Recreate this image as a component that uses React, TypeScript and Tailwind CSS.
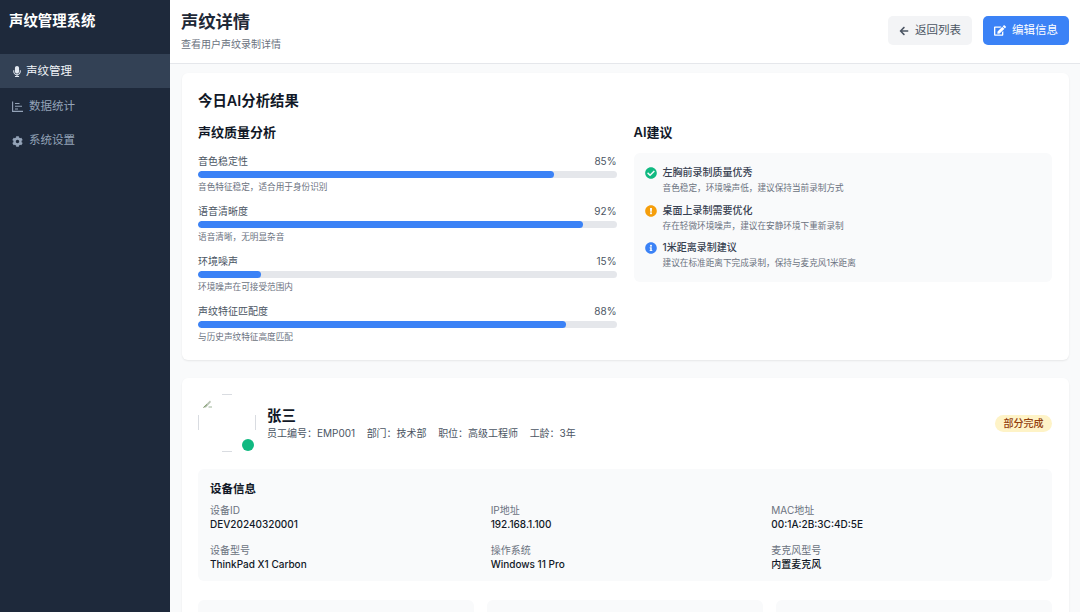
import React from "react";
import { FaArrowLeft, FaCheckCircle, FaCog, FaEdit, FaExclamationCircle, FaInfoCircle, FaMicrophone } from "react-icons/fa";

const font = { fontFamily: 'Inter, "Noto Sans CJK SC", sans-serif' };

const metrics = [
  { name: "音色稳定性", value: 85, note: "音色特征稳定，适合用于身份识别" },
  { name: "语音清晰度", value: 92, note: "语音清晰，无明显杂音" },
  { name: "环境噪声", value: 15, note: "环境噪声在可接受范围内" },
  { name: "声纹特征匹配度", value: 88, note: "与历史声纹特征高度匹配" },
];

const tips = [
  { icon: <FaCheckCircle className="text-[#10b981]" />, title: "左胸前录制质量优秀", note: "音色稳定，环境噪声低，建议保持当前录制方式" },
  { icon: <FaExclamationCircle className="text-[#f59e0b]" />, title: "桌面上录制需要优化", note: "存在轻微环境噪声，建议在安静环境下重新录制" },
  { icon: <FaInfoCircle className="text-[#3b82f6]" />, title: "1米距离录制建议", note: "建议在标准距离下完成录制，保持与麦克风1米距离" },
];

const device = [
  ["设备ID", "DEV20240320001"],
  ["IP地址", "192.168.1.100"],
  ["MAC地址", "00:1A:2B:3C:4D:5E"],
  ["设备型号", "ThinkPad X1 Carbon"],
  ["操作系统", "Windows 11 Pro"],
  ["麦克风型号", "内置麦克风"],
];

function ChartIcon() {
  return (
    <svg width="11" height="11" viewBox="0 0 11 11" fill="none" stroke="currentColor" strokeWidth="1.1" className="shrink-0">
      <path d="M0.6 0.5V10.4H11" />
      <path d="M3 2.5H7.5M3 5.2H10M3 8H6" />
    </svg>
  );
}

function Avatar() {
  return (
    <div className="relative w-[58px] h-[58px] shrink-0">
      <svg width="58" height="58" viewBox="0 0 58 58" fill="none">
        <path d="M24 0.5H34M0.5 21V36M57.5 21V36M24 57.5H34" stroke="#d9dce1" strokeWidth="1" />
        <path d="M5 13.5L12 6.5L13 8L8 13.5Z" fill="#b9c4b4" />
        <path d="M5.5 13.5L9 10.5" stroke="#7d9a6a" strokeWidth="1" />
        <path d="M10.5 13H14" stroke="#9fb59a" strokeWidth="1" />
      </svg>
      <span className="absolute right-[2px] bottom-[1px] w-3 h-3 rounded-full bg-[#10b981]" />
    </div>
  );
}

export default function App() {
  return (
    <div style={font} className="flex w-[1080px] h-[612px] overflow-hidden bg-[#f9fafb] text-[#1f2937]">
      <aside className="w-[170px] shrink-0 bg-[#1e293b]">
        <div className="px-[9px] pt-[11px] h-[54px] text-[14.4px] leading-[20px] font-semibold text-white">声纹管理系统</div>
        <nav>
          <div className="h-[34px] flex items-center gap-[4px] pl-[12px] pt-[1px] bg-[#334155] text-[#f1f5f9] text-[11.5px]">
            <FaMicrophone className="w-[10px] h-[11px] text-[#e2e8f0]" />
            声纹管理
          </div>
          <div className="h-[34px] mt-[1px] pt-[1px] flex items-center gap-[6px] pl-[12px] text-[#94a3b8] text-[11.5px]">
            <ChartIcon />
            数据统计
          </div>
          <div className="h-[34px] mt-[1px] flex items-center gap-[6px] pl-[12px] text-[#94a3b8] text-[11.5px]">
            <FaCog className="w-[11px] h-[11px]" />
            系统设置
          </div>
        </nav>
      </aside>
      <div className="flex-1 min-w-0 flex flex-col">
        <header className="h-[64px] shrink-0 bg-white border-b border-[#e5e7eb] flex items-center justify-between pl-[11px] pr-[11px]">
          <div className="-mt-[3px]">
            <h1 className="text-[17.3px] leading-[24px] font-semibold text-[#1f2937]">声纹详情</h1>
            <p className="text-[10px] leading-[14px] mt-[3px] text-[#6b7280]">查看用户声纹录制详情</p>
          </div>
          <div className="flex gap-[11px] mb-[2px]">
            <button className="h-[29px] w-[84px] rounded-[5px] bg-[#f3f4f6] text-[#4b5563] text-[11.5px] flex items-center justify-center gap-[6px]">
              <FaArrowLeft className="w-[10px] h-[10px]" />
              返回列表
            </button>
            <button className="h-[29px] w-[86px] rounded-[5px] bg-[#3b82f6] text-white text-[11.5px] flex items-center justify-center gap-[6px]">
              <FaEdit className="w-[12px] h-[11px]" />
              编辑信息
            </button>
          </div>
        </header>
        <main className="flex-1 min-h-0 overflow-hidden pl-[12px] pr-[11px] pt-[9px] flex flex-col gap-[18px]">
          <section className="h-[287px] shrink-0 bg-white rounded-[6px] shadow-[0_1px_2px_rgba(0,0,0,0.08)] pl-[16px] pr-[17px] py-[16px]">
            <h2 className="text-[14.4px] leading-[24px] font-semibold text-[#111827]">今日AI分析结果</h2>
            <div className="grid grid-cols-2 gap-[17px] mt-[10px]">
              <div>
                <h3 className="text-[13px] leading-[18px] font-semibold text-[#111827]">声纹质量分析</h3>
                <div className="mt-[13px] flex flex-col">
                  {metrics.map((m) => (
                    <div key={m.name} className="h-[50px]">
                      <div className="flex justify-between text-[10px] leading-[14px] text-[#4b5563]">
                        <span>{m.name}</span>
                        <span>{m.value}%</span>
                      </div>
                      <div className="mt-[3px] h-[7px] rounded-full bg-[#e5e7eb] overflow-hidden">
                        <div className="h-full rounded-full bg-[#3b82f6]" style={{ width: `${m.value}%` }} />
                      </div>
                      <p className="mt-[3px] text-[8.64px] leading-[12px] text-[#6b7280]">{m.note}</p>
                    </div>
                  ))}
                </div>
              </div>
              <div>
                <h3 className="text-[13px] leading-[18px] font-semibold text-[#111827]">AI建议</h3>
                <div className="mt-[12px] h-[129px] rounded-[6px] bg-[#f9fafb] px-[11px] pt-[12px]">
                  {tips.map((t) => (
                    <div key={t.title} className="flex gap-[6px] h-[37.5px]">
                      <span className="w-[12px] h-[12px] mt-[2px] text-[12px] shrink-0">{t.icon}</span>
                      <div>
                        <div className="text-[10px] leading-[14px] font-medium text-[#374151]">{t.title}</div>
                        <div className="mt-[3px] text-[8.64px] leading-[12px] text-[#6b7280]">{t.note}</div>
                      </div>
                    </div>
                  ))}
                </div>
              </div>
            </div>
          </section>
          <section className="flex-1 shrink-0 bg-white rounded-[6px] shadow-[0_1px_2px_rgba(0,0,0,0.08)] pl-[16px] pr-[17px] py-[16px]">
            <div className="flex items-center justify-between">
              <div className="flex items-center gap-[11px]">
                <Avatar />
                <div>
                  <div className="text-[14.4px] leading-[20px] font-semibold text-[#111827]">张三</div>
                  <div className="flex gap-[11.5px] text-[10px] leading-[14px] text-[#4b5563]">
                    <span>员工编号：EMP001</span>
                    <span>部门：技术部</span>
                    <span>职位：高级工程师</span>
                    <span>工龄：3年</span>
                  </div>
                </div>
              </div>
              <span className="h-[17px] w-[57px] justify-center rounded-full bg-[#fef3c7] text-[#92400e] text-[10px] font-medium flex items-center">部分完成</span>
            </div>
            <div className="mt-[17px] h-[112px] rounded-[6px] bg-[#f9fafb] p-[12px]">
              <h4 className="text-[11.5px] leading-[16px] font-semibold text-[#111827]">设备信息</h4>
              <div className="grid grid-cols-3 gap-x-[12px] gap-y-[12px] mt-[6px]">
                {device.map(([k, v]) => (
                  <div key={k}>
                    <div className="text-[10px] leading-[14px] text-[#6b7280]">{k}</div>
                    <div className="text-[10px] leading-[14px] font-medium text-[#111827]">{v}</div>
                  </div>
                ))}
              </div>
            </div>
            <div className="grid grid-cols-3 gap-[13px] mt-[19px]">
              <div className="h-[40px] rounded-[6px] bg-[#f9fafb]" />
              <div className="h-[40px] rounded-[6px] bg-[#f9fafb]" />
              <div className="h-[40px] rounded-[6px] bg-[#f9fafb]" />
            </div>
          </section>
        </main>
      </div>
    </div>
  );
}
